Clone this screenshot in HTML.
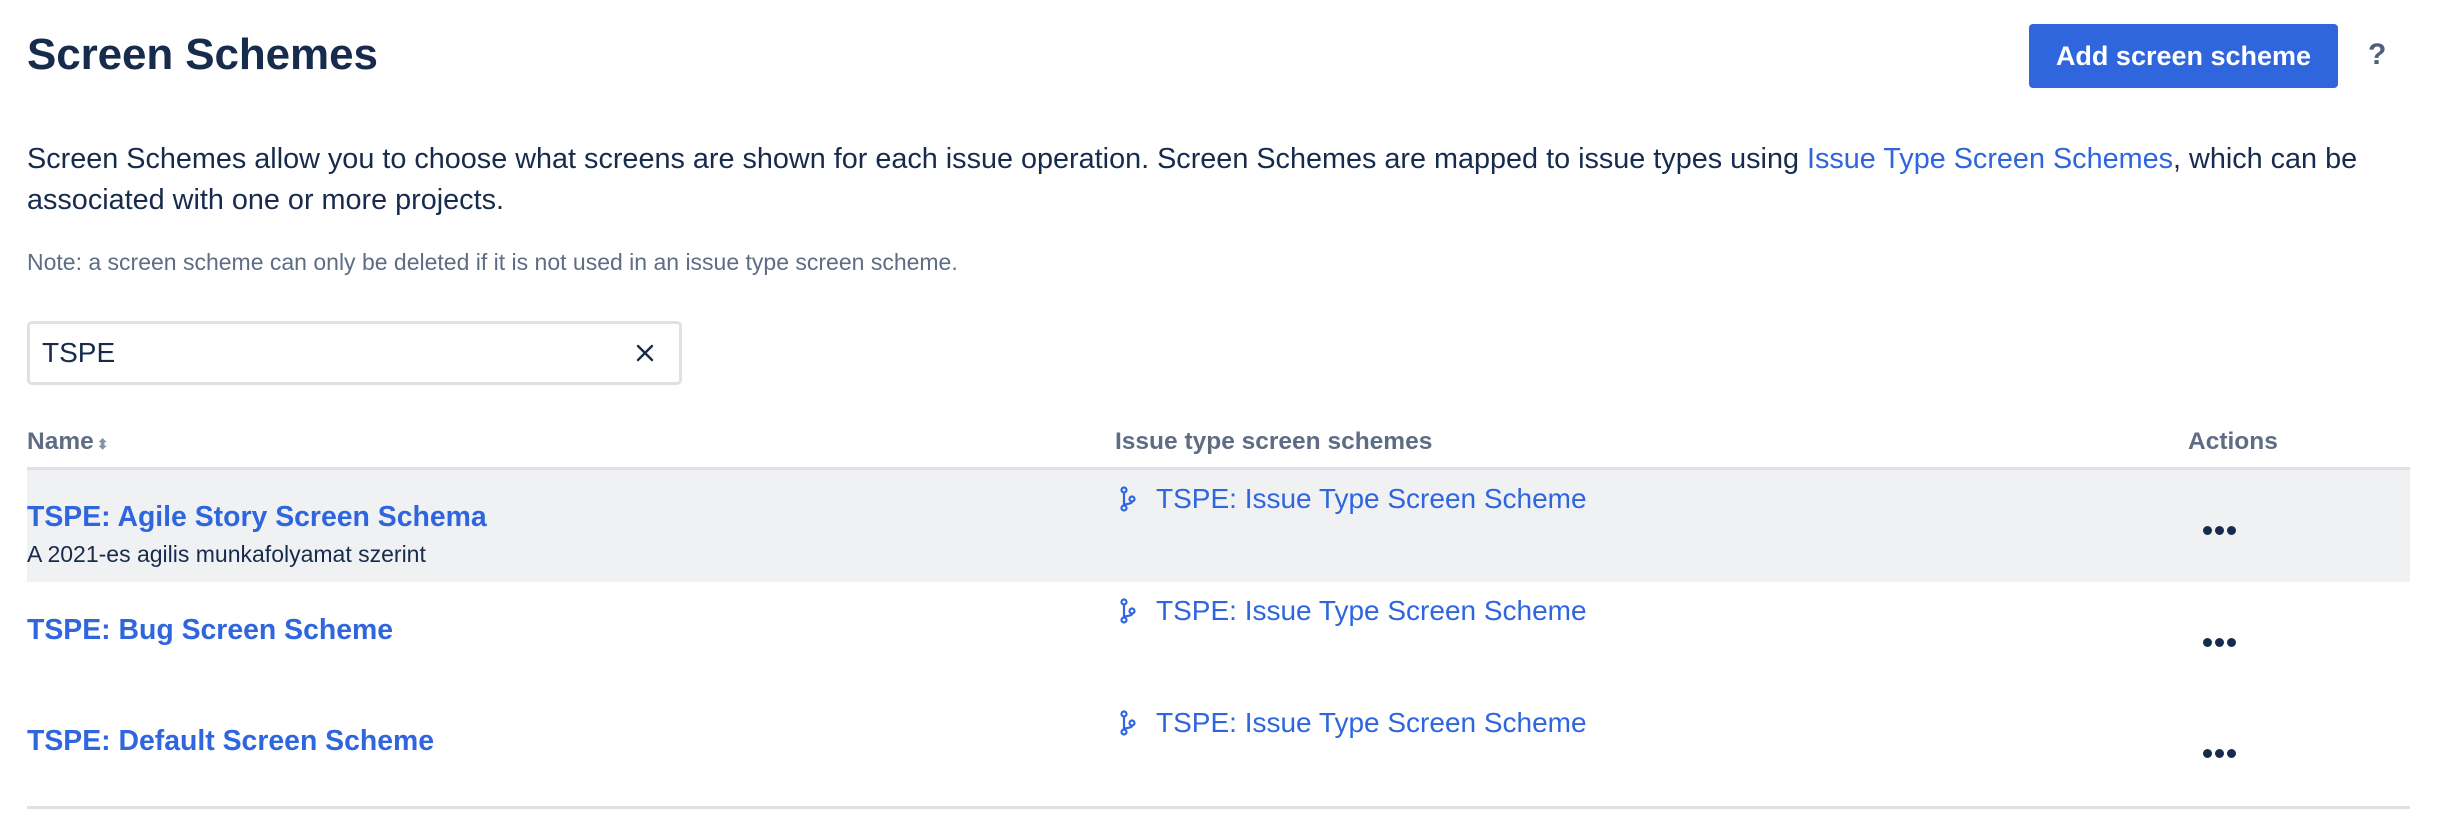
<!DOCTYPE html>
<html><head><meta charset="utf-8"><style>
*{margin:0;padding:0;box-sizing:border-box}
body{width:2452px;height:836px;background:#fff;font-family:"Liberation Sans",sans-serif;color:#172b4d;position:relative;overflow:hidden}
.a{position:absolute;white-space:nowrap}
.blue{color:#2f66dd}
h1{position:absolute;left:27px;top:30px;font-size:44px;font-weight:bold;letter-spacing:-0.1px;color:#172b4d}
.btn{position:absolute;left:2029px;top:24px;width:309px;height:64px;background:#2f66dd;border-radius:4px;color:#fff;font-weight:bold;font-size:27px;text-align:center;line-height:64px}
p.d{position:absolute;left:27px;top:139px;width:2380px;font-size:28.8px;line-height:41px}
.note{left:27px;top:249px;font-size:23px;color:#5e6c84}
.search{position:absolute;left:27px;top:321px;width:655px;height:64px;border:3px solid #dfe1e6;border-radius:5px}
.th{top:428px;font-size:24.5px;font-weight:bold;color:#5e6c84}
.line{position:absolute;left:27px;width:2383px;height:3px;background:#dfe1e6}
.row1{position:absolute;left:27px;top:470px;width:2383px;height:112px;background:#f0f1f3}
.nm{left:27px;font-size:28.4px;font-weight:bold;color:#2f66dd}
.it{left:1156px;font-size:28px;color:#2f66dd}
.ic{position:absolute;left:1120px}
.dots{position:absolute;left:2203px}
.dots i{display:inline-block;width:9px;height:9px;border-radius:50%;background:#172b4d;margin-right:3px}
</style></head><body>
<h1>Screen Schemes</h1>
<div class="btn">Add screen scheme</div>
<div class="a" style="left:2368px;top:38px;font-size:30px;font-weight:bold;color:#505f79">?</div>
<p class="d">Screen Schemes allow you to choose what screens are shown for each issue operation. Screen Schemes are mapped to issue types using <span class="blue">Issue Type Screen Schemes</span>, which can be associated with one or more projects.</p>
<div class="a note">Note: a screen scheme can only be deleted if it is not used in an issue type screen scheme.</div>
<div class="search"></div>
<div class="a" style="left:42px;top:337px;font-size:28px">TSPE</div>
<svg class="a" style="left:635px;top:343px" width="20" height="20" viewBox="0 0 20 20"><path d="M3 3L17 17M17 3L3 17" stroke="#172b4d" stroke-width="2.4" stroke-linecap="round"/></svg>
<div class="a th" style="left:27px">Name<span style="font-size:14px;color:#8993a4;margin-left:3px">⬍</span></div>
<div class="a th" style="left:1115px">Issue type screen schemes</div>
<div class="a th" style="left:2188px">Actions</div>
<div class="line" style="top:467px"></div>
<div class="row1"></div>
<div class="line" style="top:806px"></div>

<div class="a nm" style="top:501px">TSPE: Agile Story Screen Schema</div>
<div class="a" style="left:27px;top:541px;font-size:23px">A 2021-es agilis munkafolyamat szerint</div>
<div class="a nm" style="top:614px">TSPE: Bug Screen Scheme</div>
<div class="a nm" style="top:725px">TSPE: Default Screen Scheme</div>

<svg class="ic" style="top:486px" width="16" height="26" viewBox="0 0 16 26"><g fill="none" stroke="#2f66dd" stroke-width="2.2"><circle cx="4" cy="4" r="2.5"/><circle cx="12" cy="13" r="2.5"/><circle cx="4" cy="22" r="2.5"/><path d="M4 6.5V19.5M12 15.5c0 3-8 2-8 4"/></g></svg>
<div class="a it" style="top:483px">TSPE: Issue Type Screen Scheme</div>
<svg class="ic" style="top:598px" width="16" height="26" viewBox="0 0 16 26"><g fill="none" stroke="#2f66dd" stroke-width="2.2"><circle cx="4" cy="4" r="2.5"/><circle cx="12" cy="13" r="2.5"/><circle cx="4" cy="22" r="2.5"/><path d="M4 6.5V19.5M12 15.5c0 3-8 2-8 4"/></g></svg>
<div class="a it" style="top:595px">TSPE: Issue Type Screen Scheme</div>
<svg class="ic" style="top:710px" width="16" height="26" viewBox="0 0 16 26"><g fill="none" stroke="#2f66dd" stroke-width="2.2"><circle cx="4" cy="4" r="2.5"/><circle cx="12" cy="13" r="2.5"/><circle cx="4" cy="22" r="2.5"/><path d="M4 6.5V19.5M12 15.5c0 3-8 2-8 4"/></g></svg>
<div class="a it" style="top:707px">TSPE: Issue Type Screen Scheme</div>

<div class="dots" style="top:522px"><i></i><i></i><i></i></div>
<div class="dots" style="top:634px"><i></i><i></i><i></i></div>
<div class="dots" style="top:745px"><i></i><i></i><i></i></div>
</body></html>
